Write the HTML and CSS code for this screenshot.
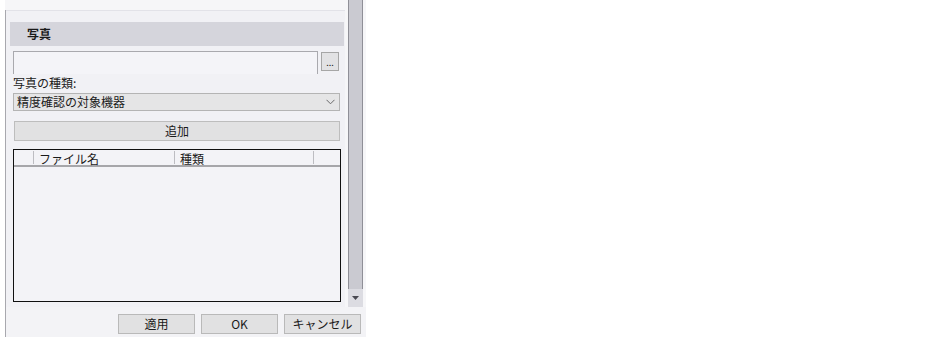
FILE: index.html
```html
<!DOCTYPE html>
<html lang="ja">
<head>
<meta charset="utf-8">
<title>写真</title>
<link rel="stylesheet" href="styles.css">
</head>
<body>
<div class="window">
  <div class="scroll">
    <div class="gutter"></div>
    <div class="pane">
      <div class="section-title">写真</div>
      <div class="file-row">
        <div class="file-input"></div>
        <button class="browse">...</button>
      </div>
      <div class="label">写真の種類:</div>
      <div class="select">
        <span>精度確認の対象機器</span>
        <svg class="chev" width="9" height="6" viewBox="0 0 9 6"><path d="M0.5 0.8 L4.5 4.8 L8.5 0.8" fill="none" stroke="#6a6a6a" stroke-width="1"/></svg>
      </div>
      <button class="add">追加</button>
      <div class="table">
        <div class="thead">
          <div class="th c0"></div>
          <div class="th c1">ファイル名</div>
          <div class="th c2">種類</div>
          <div class="th c3"></div>
        </div>
        <div class="tbody"></div>
      </div>
    </div>
    <div class="gap"></div>
    <div class="scrollbar">
      <div class="thumb"></div>
      <div class="arrow">
        <svg width="7" height="4" viewBox="0 0 7 4"><path d="M0 0 H7 L3.5 4 Z" fill="#4a4a52"/></svg>
      </div>
    </div>
  </div>
  <div class="footer">
    <button class="btn">適用</button>
    <button class="btn">OK</button>
    <button class="btn">キャンセル</button>
  </div>
</div>
</body>
</html>
```
FILE: styles.css
```css
* { box-sizing: border-box; }
html, body { margin: 0; padding: 0; background: #ffffff; }
body {
  font-family: "Noto Sans CJK JP", "Noto Sans", sans-serif;
  font-size: 12px;
  color: #1a1a1a;
}
button {
  font-family: inherit;
  font-size: 12px;
  color: #1a1a1a;
  padding: 0;
  margin: 0;
}
.window {
  margin-left: 5px;
  width: 361px;
  height: 337px;
  display: flex;
  flex-direction: column;
}
.scroll {
  display: flex;
  height: 307px;
  background: #f6f6f8;
}
.gutter {
  width: 1px;
  margin-top: 10px;
  background: #a8a8ae;
}
.pane {
  width: 339px;
  margin-top: 10px;
  border-top: 1px solid #e2e2e8;
  background: #f1f1f5;
  display: flex;
  flex-direction: column;
  align-items: flex-start;
}
.section-title {
  margin-top: 11px;
  margin-left: 4px;
  width: 334px;
  height: 24px;
  background: #d5d5dc;
  font-weight: bold;
  line-height: 24px;
  padding-left: 17px;
}
.file-row {
  display: flex;
  margin-top: 5px;
  margin-left: 7px;
}
.file-input {
  width: 305px;
  height: 23px;
  border: 1px solid #a9a9ae;
  border-bottom: none;
  background: #f4f4f8;
}
.browse {
  width: 18px;
  height: 19px;
  margin-left: 3px;
  margin-top: 1px;
  border: 1px solid #a6a6a6;
  background: #e2e2e4;
  font-size: 9px;
  line-height: 14px;
  padding-top: 2px;
}
.label {
  margin-left: 7px;
  height: 16px;
  line-height: 16px;
  margin-top: 1px;
}
.select {
  margin-top: 2px;
  margin-left: 7px;
  width: 327px;
  height: 18px;
  border: 1px solid #b4b4b4;
  background: #e5e5e6;
  display: flex;
  align-items: center;
  justify-content: space-between;
  padding-left: 3px;
  padding-right: 4px;
  line-height: 16px;
}
.add {
  margin-top: 10px;
  margin-left: 8px;
  width: 326px;
  height: 20px;
  border: 1px solid #bdbdbd;
  background: #e1e1e2;
  line-height: 18px;
}
.table {
  margin-top: 8px;
  margin-left: 7px;
  width: 328px;
  height: 153px;
  border: 1px solid #101010;
  background: #f3f3f7;
  display: flex;
  flex-direction: column;
}
.thead {
  display: flex;
  height: 17px;
  border-bottom: 2px solid #a6a6aa;
}
.th {
  line-height: 15px;
  padding-left: 5px;
  border-right: 1px solid #bdbdc2;
  margin: 1px 0;
}
.c0 { width: 20px; }
.c1 { width: 141px; }
.c2 { width: 139px; }
.c3 { flex: 1; border-right: none; }
.tbody { flex: 1; }
.gap { width: 3px; }
.scrollbar {
  width: 15px;
  display: flex;
  flex-direction: column;
}
.thumb {
  height: 289px;
  background: #cacad1;
  border-left: 1px solid #8f8f97;
  border-right: 1px solid #8f8f97;
}
.arrow {
  height: 18px;
  background: #dcdce2;
  display: flex;
  align-items: center;
  justify-content: center;
}
.footer {
  height: 30px;
  border-left: 1px solid #a8a8ae;
  background: #f3f3f6;
  display: flex;
  justify-content: flex-end;
  align-items: flex-start;
  gap: 6px;
  padding-top: 7px;
  padding-right: 5px;
}
.btn {
  width: 77px;
  height: 20px;
  border: 1px solid #b9b9b9;
  background: #e1e1e2;
  line-height: 18px;
}
```
